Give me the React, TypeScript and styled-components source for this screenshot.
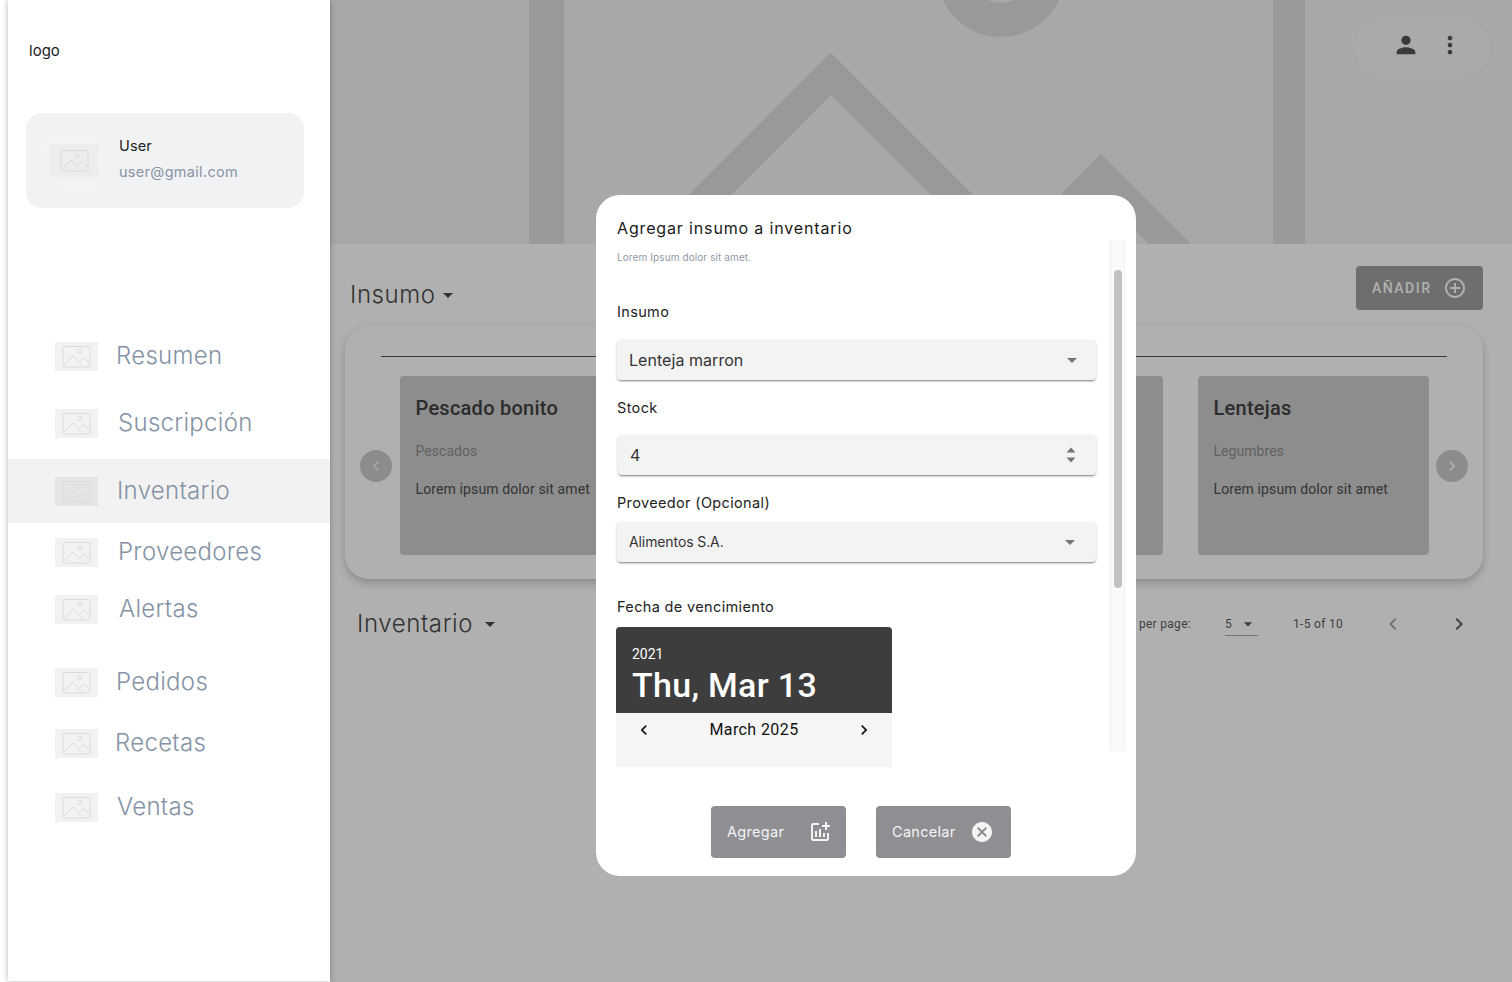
import React from "react";
import styled, { createGlobalStyle } from "styled-components";

const GlobalStyle = createGlobalStyle`
  html, body {
    margin: 0;
    padding: 0;
    height: 982px;
    overflow: hidden;
    background: #fff;
  }
  * { box-sizing: border-box; }
`;

const display = `"Inter", "Lato", sans-serif`;
const inter = `"Inter", "Liberation Sans", sans-serif`;
const roboto = `"Roboto", "Liberation Sans", sans-serif`;

const Page = styled.div`
  display: flex;
  height: 982px;
  padding-left: 8px;
`;

const Sidebar = styled.aside`
  position: relative;
  z-index: 2;
  flex: 0 0 322px;
  height: 981px;
  background: #fff;
  box-shadow: 0 0 6px rgba(0, 0, 0, 0.3);
`;

const Logo = styled.div`
  padding: 42px 0 0 21px;
  font: 400 15px/18px ${inter};
  color: #1b1b1b;
`;

const UserCard = styled.div`
  display: flex;
  align-items: center;
  width: 278px;
  height: 95px;
  margin: 53px 0 0 18px;
  padding-left: 24px;
  background: #f1f2f4;
  border-radius: 16px;
`;

const UserText = styled.div`
  margin: 0 0 4px 21px;
`;

const UserName = styled.div`
  font: 400 14.5px/18px ${inter};
  letter-spacing: 0.1px;
  color: #1e1e1e;
`;

const UserMail = styled.div`
  margin-top: 8px;
  font: 400 14.5px/18px ${inter};
  letter-spacing: 0.3px;
  color: #8a94a6;
`;

const Nav = styled.nav`
  margin-top: 128px;
`;

const NavRow = styled.div<{ $gap: number; $active?: boolean; $indent: number }>`
  display: flex;
  align-items: center;
  height: ${(p) => (p.$active ? 64 : 40)}px;
  margin-top: ${(p) => p.$gap}px;
  padding-left: 47px;
  background: ${(p) => (p.$active ? "#f2f2f2" : "transparent")};
  span {
    margin-left: ${(p) => p.$indent}px;
    font: 300 24px/36px ${display};
    letter-spacing: 0.3px;
    color: #8493a5;
  }
`;

const Main = styled.main`
  position: relative;
  flex: 1;
  min-width: 0;
  height: 982px;
  overflow: hidden;
  background: #fff;
`;

const Hero = styled.div`
  height: 244px;
  background: #f3f3f3;
  overflow: hidden;
  svg {
    display: block;
  }
`;

const TopActions = styled.div`
  position: absolute;
  top: 20px;
  right: 22px;
  display: flex;
  align-items: center;
  justify-content: flex-end;
  gap: 16px;
  width: 135px;
  height: 55px;
  padding: 0 26px 5px 0;
  background: #f7f7f7;
  border-radius: 26px;
  color: #555;
`;

const SectionHead = styled.div`
  display: flex;
  justify-content: space-between;
  height: 82px;
  padding: 22px 29px 0 20px;
`;

const Title = styled.div`
  display: flex;
  align-items: center;
  height: 36px;
  font: 300 24px/36px ${display};
  letter-spacing: 0.6px;
  color: #4a4a4a;
`;

const InsumoTitle = styled(Title)`
  margin-top: 11px;
`;

const TitleCaret = styled.span<{ $gap: number }>`
  display: flex;
  margin-left: ${(p) => p.$gap}px;
`;

const AddButton = styled.button`
  display: flex;
  align-items: center;
  justify-content: space-between;
  width: 127px;
  height: 44px;
  padding: 0 16px;
  border: 0;
  border-radius: 4px;
  background: #a0a0a0;
  color: #fff;
  font: 500 14px/16px ${roboto};
  letter-spacing: 1.5px;
`;

const Panel = styled.section`
  height: 253px;
  margin: 0 29px 0 15px;
  padding: 30px 15px 0;
  border-radius: 24px;
  background: #fff;
  box-shadow: 0 4px 8px rgba(0, 0, 0, 0.22);
`;

const Divider = styled.div`
  height: 1px;
  margin: 0 21px;
  background: #555;
`;

const Carousel = styled.div`
  display: flex;
  align-items: center;
  justify-content: space-between;
  margin-top: 19px;
`;

const Cards = styled.div`
  display: flex;
  gap: 35px;
`;

const Card = styled.article`
  width: 231px;
  height: 179px;
  padding: 20px 16px;
  border-radius: 4px;
  background: #cccccc;
`;

const CardTitle = styled.h3`
  margin: 0;
  font: 500 20px/24px ${roboto};
  letter-spacing: 0.25px;
  color: #404040;
`;

const CardTag = styled.div`
  margin-top: 21px;
  font: 400 14px/20px ${roboto};
  letter-spacing: 0.05px;
  color: #8e8e8e;
`;

const CardText = styled.p`
  margin: 18px 0 0;
  font: 400 14px/20px ${roboto};
  letter-spacing: 0.12px;
  color: #4d4d4d;
`;

const RoundNav = styled.div<{ $faded?: boolean }>`
  display: flex;
  align-items: center;
  justify-content: center;
  width: 32px;
  height: 32px;
  border-radius: 50%;
  background: #cbcbcb;
  color: ${(p) => (p.$faded ? "#f2f2f2" : "#fff")};
`;

const TableBar = styled.div`
  display: flex;
  align-items: center;
  justify-content: space-between;
  height: 36px;
  margin-top: 27px;
  padding: 0 41px 0 27px;
`;

const Pagination = styled.div`
  display: flex;
  align-items: center;
  font: 400 12px/16px ${roboto};
  letter-spacing: 0.3px;
  color: #5d5d5d;
`;

const PerPage = styled.div`
  display: flex;
  align-items: center;
  justify-content: space-between;
  width: 33px;
  height: 24px;
  margin: 0 34px 0 34px;
  margin-right: 35px;
  border-bottom: 1px solid #aaa;
`;

const PageArrows = styled.div`
  display: flex;
  gap: 42px;
  margin-left: 38px;
`;

const PageArrow = styled.span<{ $disabled?: boolean }>`
  display: flex;
  color: ${(p) => (p.$disabled ? "#aaa" : "#5d5d5d")};
`;

const Overlay = styled.div`
  position: absolute;
  inset: 0;
  padding: 195px 0 0 266px;
  background: rgba(0, 0, 0, 0.31);
`;

const Modal = styled.div`
  width: 540px;
  height: 681px;
  padding: 21px 0 0 21px;
  border-radius: 24px;
  background: #fff;
`;

const ModalTitle = styled.h2`
  margin: 0;
  font: 400 16px/24px ${display};
  letter-spacing: 0.85px;
  color: #1a1a1a;
`;

const ModalBody = styled.div`
  display: flex;
  height: 527px;
`;

const Form = styled.div`
  width: 479px;
`;

const Subtitle = styled.div`
  margin-top: 11px;
  font: 400 10px/12px ${inter};
  letter-spacing: 0.1px;
  color: #8f98a6;
`;

const Label = styled.label<{ $top: number }>`
  display: block;
  margin-top: ${(p) => p.$top}px;
  font: 400 14.5px/20px ${inter};
  letter-spacing: 0.35px;
  color: #222;
`;

const Field = styled.div<{ $top: number; $small?: boolean }>`
  display: flex;
  align-items: center;
  justify-content: space-between;
  height: 40px;
  margin-top: ${(p) => p.$top}px;
  padding: 0 ${(p) => (p.$small ? 14 : 12)}px 0 12px;
  border-radius: 4px;
  background: #f3f3f3;
  box-shadow: 0 2px 2px -1px rgba(0, 0, 0, 0.4), 0 1px 3px rgba(0, 0, 0, 0.16);
  font: 400 ${(p) => (p.$small ? 14 : 16)}px/20px ${inter};
  letter-spacing: ${(p) => (p.$small ? -0.1 : 0.05)}px;
  color: #333;
  svg {
    color: #757575;
  }
`;

const StockField = styled(Field)`
  margin-left: 1px;
  padding-right: 13px;
`;

const Calendar = styled.div`
  width: 276px;
  height: 140px;
  margin: 10px 0 0 -1px;
  background: #f5f5f5;
`;

const CalendarHead = styled.div`
  height: 86px;
  padding: 18px 16px 0;
  border-radius: 4px 4px 0 0;
  background: #3d3d3d;
  color: #fff;
`;

const CalendarYear = styled.div`
  font: 400 14px/18px ${roboto};
`;

const CalendarDate = styled.div`
  margin-top: 2px;
  font: 500 34px/40px ${roboto};
  letter-spacing: 0.3px;
`;

const CalendarNav = styled.div`
  display: flex;
  align-items: center;
  justify-content: space-between;
  height: 34px;
  padding: 0 18px;
  font: 400 16px/20px ${roboto};
  letter-spacing: 0.4px;
  color: #111;
`;

const ScrollTrack = styled.div`
  position: relative;
  flex: 0 0 15px;
  height: 511px;
  margin-left: 14px;
  background: #fafafa;
  border-left: 1px solid #ececec;
  border-right: 1px solid #f2f2f2;
`;

const ScrollThumb = styled.div`
  position: absolute;
  top: 30px;
  left: 3px;
  width: 8px;
  height: 318px;
  border-radius: 4px;
  background: #c1c1c1;
`;

const ModalActions = styled.div`
  display: flex;
  justify-content: center;
  gap: 30px;
  margin-left: -21px;
  padding: 39px 10px 0 0;
`;

const ActionButton = styled.button<{ $end: number }>`
  display: flex;
  align-items: center;
  justify-content: space-between;
  width: 135px;
  height: 52px;
  padding: 0 ${(p) => p.$end}px 0 16px;
  border: 0;
  border-radius: 4px;
  background: #8e8e93;
  color: #f4f4f4;
  font: 400 14.5px/20px ${inter};
  letter-spacing: 0.3px;
`;

const Thumb = styled.svg`
  display: block;
  flex: none;
`;

const Placeholder = () => (
  <Thumb width="43" height="29" viewBox="0 0 43 29">
    <rect width="43" height="29" fill="#000" opacity="0.05" />
    <rect x="8" y="4.5" width="27" height="20.5" rx="2" fill="none" stroke="#dadada" strokeWidth="1" />
    <circle cx="24.5" cy="9.5" r="2" fill="none" stroke="#dadada" />
    <path d="M9 23l9-9 9 9.5M25 19l4-3.5 5.5 6" fill="none" stroke="#dadada" />
  </Thumb>
);

const Avatar = styled.div`
  position: relative;
  display: flex;
  align-items: center;
  justify-content: center;
  flex: none;
  width: 48px;
  height: 33px;
  background: #ededed;
  &::before {
    content: "";
    position: absolute;
    top: -14px;
    left: -7px;
    width: 62px;
    height: 62px;
    border-radius: 50%;
    background: #f3f3f3;
    z-index: 0;
  }
  &::after {
    content: "";
    position: absolute;
    inset: 0;
    background: #ededed;
    z-index: 0;
  }
  svg {
    position: relative;
    z-index: 1;
  }
  svg rect:first-child {
    opacity: 0;
  }
`;

const Icon = ({ d, size = 24 }: { d: string; size?: number }) => (
  <svg width={size} height={size} viewBox="0 0 24 24" fill="currentColor" style={{ display: "block", flex: "none" }}>
    <path d={d} />
  </svg>
);

const icons = {
  drop: "M7 10l5 5 5-5z",
  person: "M12 12c2.21 0 4-1.79 4-4s-1.79-4-4-4-4 1.79-4 4 1.79 4 4 4zm0 2c-2.67 0-8 1.34-8 4v2h16v-2c0-2.66-5.33-4-8-4z",
  more: "M12 8c1.1 0 2-.9 2-2s-.9-2-2-2-2 .9-2 2 .9 2 2 2zm0 2c-1.1 0-2 .9-2 2s.9 2 2 2 2-.9 2-2-.9-2-2-2zm0 6c-1.1 0-2 .9-2 2s.9 2 2 2 2-.9 2-2-.9-2-2-2z",
  cancel: "M12 2C6.47 2 2 6.47 2 12s4.47 10 10 10 10-4.47 10-10S17.53 2 12 2zm5 13.59L15.59 17 12 13.41 8.41 17 7 15.59 10.59 12 7 8.41 8.41 7 12 10.59 15.59 7 17 8.41 13.41 12 17 15.59z",
  addChart: "M22 5v2h-3v3h-2V7h-3V5h3V2h2v3h3zm-3 14H5V5h6V3H5c-1.1 0-2 .9-2 2v14c0 1.1.9 2 2 2h14c1.1 0 2-.9 2-2v-6h-2v6zm-4-6v4h2v-4h-2zm-4 4h2V9h-2v8zm-2 0v-6H7v6h2z",
  addCircle: "M13 7h-2v4H7v2h4v4h2v-4h4v-2h-4V7zm-1-5C6.48 2 2 6.48 2 12s4.48 10 10 10 10-4.48 10-10S17.52 2 12 2zm0 18c-4.41 0-8-3.59-8-8s3.59-8 8-8 8 3.59 8 8-3.59 8-8 8z",
  left: "M15.41 7.41 14 6l-6 6 6 6 1.41-1.41L10.83 12z",
  right: "M10 6 8.59 7.41 13.17 12l-4.58 4.59L10 18l6-6z",
  spinner: "M12 4.5l4.5 5h-9zM12 19.5l-4.5-5h9z",
};

const navItems = [
  { label: "Resumen", gap: 0, indent: 18 },
  { label: "Suscripción", gap: 27, indent: 20 },
  { label: "Inventario", gap: 16, indent: 19, active: true },
  { label: "Proveedores", gap: 9, indent: 20 },
  { label: "Alertas", gap: 17, indent: 21 },
  { label: "Pedidos", gap: 33, indent: 18 },
  { label: "Recetas", gap: 21, indent: 17 },
  { label: "Ventas", gap: 24, indent: 19 },
];

const cards = [
  { title: "Pescado bonito", tag: "Pescados" },
  { title: "Arroz", tag: "Cereales" },
  { title: "Aceite", tag: "Aceites" },
  { title: "Lentejas", tag: "Legumbres" },
];

const App = () => (
  <>
    <GlobalStyle />
    <Page>
      <Sidebar>
        <Logo>logo</Logo>
        <UserCard>
          <Avatar>
            <Placeholder />
          </Avatar>
          <UserText>
            <UserName>User</UserName>
            <UserMail>user@gmail.com</UserMail>
          </UserText>
        </UserCard>
        <Nav>
          {navItems.map((item) => (
            <NavRow key={item.label} $gap={item.gap} $active={item.active} $indent={item.indent}>
              <Placeholder />
              <span>{item.label}</span>
            </NavRow>
          ))}
        </Nav>
      </Sidebar>
      <Main>
        <Hero>
          <svg width="1182" height="244" viewBox="0 0 1182 244" fill="none" stroke="#dedede">
            <path d="M216.5 -5V260" strokeWidth="35" />
            <path d="M959 -5V260" strokeWidth="32" />
            <circle cx="671" cy="-27" r="47" strokeWidth="34" />
            <path d="M311 264L501 74L691 264M731 215L771 175L861 265" strokeWidth="30" />
          </svg>
        </Hero>
        <TopActions>
          <Icon d={icons.person} size={28} />
          <Icon d={icons.more} size={28} />
        </TopActions>
        <SectionHead>
          <InsumoTitle>
            Insumo
            <TitleCaret $gap={0}>
              <Icon d={icons.drop} size={24} />
            </TitleCaret>
          </InsumoTitle>
          <AddButton>
            AÑADIR
            <Icon d={icons.addCircle} size={24} />
          </AddButton>
        </SectionHead>
        <Panel>
          <Divider />
          <Carousel>
            <RoundNav $faded>
              <Icon d={icons.left} size={20} />
            </RoundNav>
            <Cards>
              {cards.map((card) => (
                <Card key={card.title}>
                  <CardTitle>{card.title}</CardTitle>
                  <CardTag>{card.tag}</CardTag>
                  <CardText>Lorem ipsum dolor sit amet</CardText>
                </Card>
              ))}
            </Cards>
            <RoundNav>
              <Icon d={icons.right} size={20} />
            </RoundNav>
          </Carousel>
        </Panel>
        <TableBar>
          <Title>
            Inventario
            <TitleCaret $gap={5}>
              <Icon d={icons.drop} size={24} />
            </TitleCaret>
          </Title>
          <Pagination>
            <span>Rows per page:</span>
            <PerPage>
              5
              <Icon d={icons.drop} size={20} />
            </PerPage>
            <span>1-5 of 10</span>
            <PageArrows>
              <PageArrow $disabled>
                <Icon d={icons.left} size={24} />
              </PageArrow>
              <PageArrow>
                <Icon d={icons.right} size={24} />
              </PageArrow>
            </PageArrows>
          </Pagination>
        </TableBar>
        <Overlay>
          <Modal>
            <ModalTitle>Agregar insumo a inventario</ModalTitle>
            <ModalBody>
              <Form>
                <Subtitle>Lorem Ipsum dolor sit amet.</Subtitle>
                <Label $top={39}>Insumo</Label>
                <Field $top={18}>
                  Lenteja marron
                  <Icon d={icons.drop} size={24} />
                </Field>
                <Label $top={18}>Stock</Label>
                <StockField $top={17}>
                  4
                  <Icon d={icons.spinner} size={24} />
                </StockField>
                <Label $top={18}>Proveedor (Opcional)</Label>
                <Field $top={9} $small>
                  Alimentos S.A.
                  <Icon d={icons.drop} size={24} />
                </Field>
                <Label $top={35}>Fecha de vencimiento</Label>
                <Calendar>
                  <CalendarHead>
                    <CalendarYear>2021</CalendarYear>
                    <CalendarDate>Thu, Mar 13</CalendarDate>
                  </CalendarHead>
                  <CalendarNav>
                    <Icon d={icons.left} size={20} />
                    March 2025
                    <Icon d={icons.right} size={20} />
                  </CalendarNav>
                </Calendar>
              </Form>
              <ScrollTrack>
                <ScrollThumb />
              </ScrollTrack>
            </ModalBody>
            <ModalActions>
              <ActionButton $end={14}>
                Agregar
                <Icon d={icons.addChart} size={24} />
              </ActionButton>
              <ActionButton $end={17}>
                Cancelar
                <Icon d={icons.cancel} size={24} />
              </ActionButton>
            </ModalActions>
          </Modal>
        </Overlay>
      </Main>
    </Page>
  </>
);

export default App;
